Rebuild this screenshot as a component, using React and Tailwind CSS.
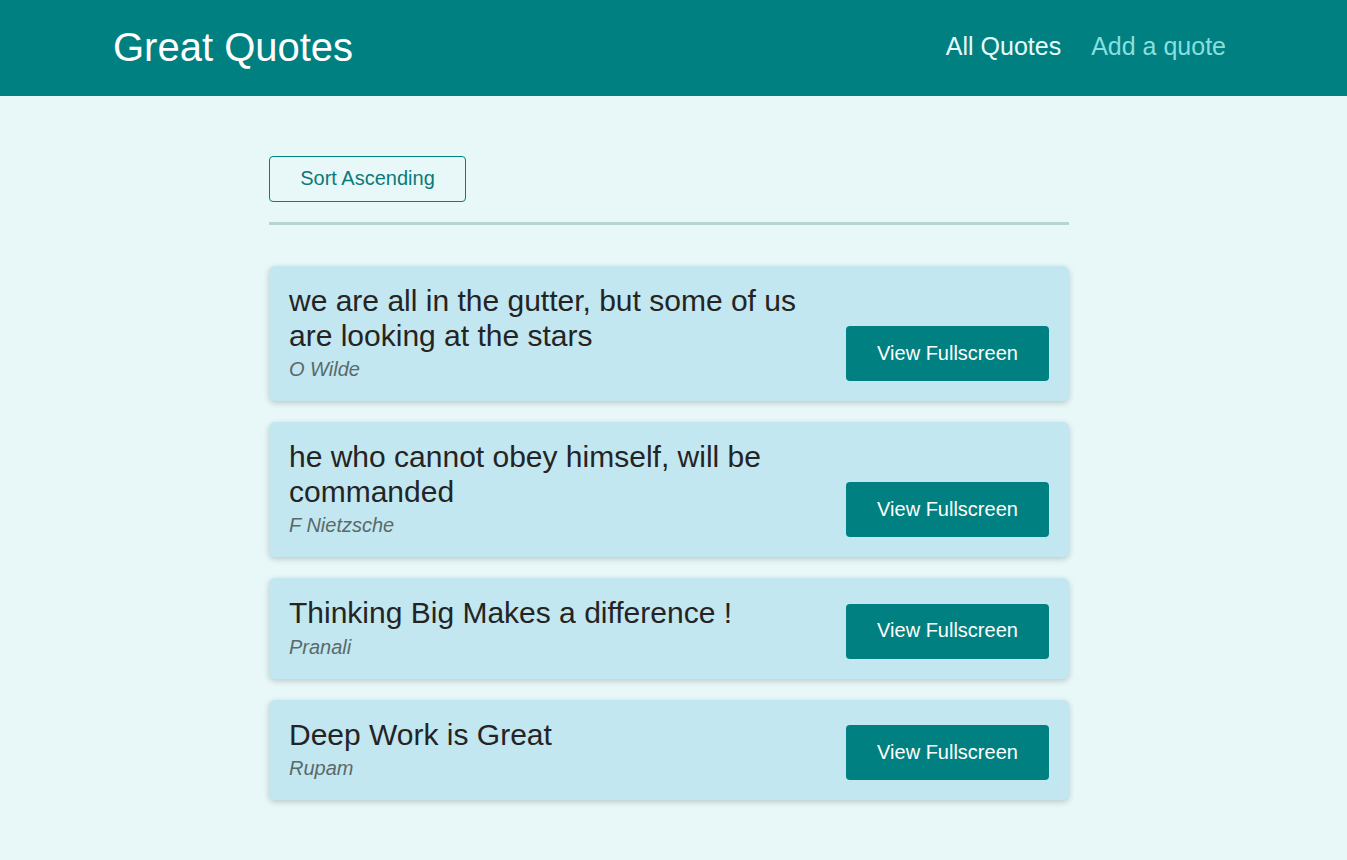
const quotes = [
  { id: 'q1', text: 'we are all in the gutter, but some of us are looking at the stars', author: 'O Wilde' },
  { id: 'q2', text: 'he who cannot obey himself, will be commanded', author: 'F Nietzsche' },
  { id: 'q3', text: 'Thinking Big Makes a difference !', author: 'Pranali' },
  { id: 'q4', text: 'Deep Work is Great', author: 'Rupam' },
];

function MainHeader() {
  return (
    <header className="flex h-[96px] items-center justify-between bg-[#008080] pb-[2px] pl-[113px] pr-[121px]">
      <div className="text-[40px] leading-none text-white">Great Quotes</div>
      <nav>
        <ul className="flex items-center gap-[30px] text-[25px]">
          <li><a href="#" className="text-[#e6fcfc]">All Quotes</a></li>
          <li><a href="#" className="text-[#88dfdf]">Add a quote</a></li>
        </ul>
      </nav>
    </header>
  );
}

function QuoteItem({ quote }) {
  return (
    <li className="flex items-end gap-5 rounded-md bg-[#c2e7f0] pb-[20px] pl-5 pr-5 pt-[18px] shadow-[0_2px_6px_rgba(0,0,0,0.2)]">
      <figure className="flex-1">
        <blockquote className="text-[30px] leading-[34.5px] text-[#242424]">{quote.text}</blockquote>
        <figcaption className="mt-[5px] text-[20px] leading-[23px] italic text-[#5a6a6a]">{quote.author}</figcaption>
      </figure>
      <a
        href="#"
        className="flex h-[55px] w-[203px] shrink-0 items-center justify-center rounded bg-[#008080] pb-[2px] text-[20px] text-white"
      >
        View Fullscreen
      </a>
    </li>
  );
}

export default function App() {
  return (
    <div className="min-h-screen bg-[#e8f8f8] font-['Liberation_Sans',Arial,sans-serif]">
      <MainHeader />
      <main className="pr-[9px]">
        <div className="mx-auto w-[800px] pt-[60px]">
          <div className="border-b-[3px] border-[#b6d5d5] pb-[20px]">
            <button
              type="button"
              className="h-[46px] w-[197px] rounded border border-[#008080] pb-[2px] text-[20px] text-[#0a7a7a]"
            >
              Sort Ascending
            </button>
          </div>
          <ul className="mt-[41px] flex flex-col gap-[21px] pb-10">
            {quotes.map((q) => (
              <QuoteItem key={q.id} quote={q} />
            ))}
          </ul>
        </div>
      </main>
    </div>
  );
}
